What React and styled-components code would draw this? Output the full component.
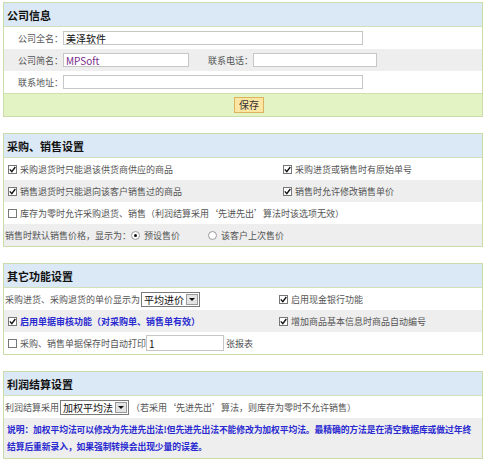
import React from 'react';
import styled, { createGlobalStyle } from 'styled-components';

const GlobalStyle = createGlobalStyle`
	body {
		margin: 0;
		background: #ffffff;
		font-family: 'Noto Sans CJK SC', 'Liberation Sans', sans-serif;
		font-size: 9px;
		color: #444;
	}
`;

const Page = styled.div`
	width: 480px;
	padding: 2px 0 0 3px;
	display: flex;
	flex-flow: column nowrap;
	gap: 16px;
`;

const Panel = styled.section`
	border: 1px solid #c9dca9;
	display: flex;
	flex-flow: column nowrap;
`;

const Header = styled.h3`
	margin: 0;
	height: 23px;
	display: flex;
	align-items: center;
	padding-left: 3px;
	background: #dbe9f6;
	border-bottom: 1px solid #cfe0bb;
	font-size: 11px;
	font-weight: bold;
	color: #111;
`;

const Row = styled.div`
	height: ${(p) => p.$h || 22}px;
	display: ${(p) => (p.$cols ? 'grid' : 'flex')};
	grid-template-columns: ${(p) => p.$cols || 'none'};
	align-items: center;
	padding-left: ${(p) => (p.$pad === undefined ? 3 : p.$pad)}px;
	background: ${(p) => (p.$gray ? '#eeeeee' : '#ffffff')};
	white-space: nowrap;
`;

const Cell = styled.div`
	display: flex;
	align-items: center;
`;

const Label = styled.span`
	width: ${(p) => p.$w || 56}px;
	text-align: right;
	color: #555;
	margin-left: ${(p) => p.$ml || 0}px;
`;

const TextInput = styled.div`
	width: ${(p) => p.$w}px;
	height: ${(p) => p.$h || 14}px;
	box-sizing: border-box;
	border: 1px solid #c6c6c6;
	background: #fff;
	display: flex;
	align-items: center;
	padding-left: 2px;
	font-size: 10px;
	color: ${(p) => p.$color || '#111'};
	margin-right: 2px;
`;

const Footer = styled.div`
	height: 22px;
	display: flex;
	align-items: center;
	justify-content: center;
	background: #e4f3c4;
	border-top: 1px solid #cfe0b0;
`;

const SaveButton = styled.button`
	height: 16px;
	padding: 0 4px;
	font-family: inherit;
	font-size: 10px;
	color: #333;
	background: #fde6a4;
	border: 1px solid #dcb35e;
	margin-left: 12px;
	line-height: 1;
`;

const Box = styled.span`
	width: 9px;
	height: 9px;
	box-sizing: border-box;
	border: 1px solid #777;
	background: #fff;
	display: inline-flex;
	align-items: center;
	justify-content: center;
	margin: 0 3px 0 1px;
	flex: none;
`;

const Radio = styled(Box)`
	border-radius: 50%;
	border-color: #999;
	margin: 0 4px 0 ${(p) => p.$ml || 0}px;
`;

const Dot = styled.span`
	width: 3px;
	height: 3px;
	border-radius: 50%;
	background: #111;
`;

const Text = styled.span`
	color: ${(p) => (p.$blue ? '#2a2ad0' : '#555')};
	font-weight: ${(p) => (p.$blue ? 'bold' : 'normal')};
	margin-left: ${(p) => p.$ml || 0}px;
`;

const SelectBox = styled.div`
	height: 15px;
	box-sizing: border-box;
	border: 1px solid #7a7a7a;
	background: #fff;
	display: flex;
	align-items: center;
	gap: 2px;
	padding-left: 2px;
	font-size: 10px;
	color: #111;
	margin: 0 2px 0 1px;
`;

const Arrow = styled.span`
	width: 12px;
	height: 11px;
	margin-right: 1px;
	background: #e4e4e4;
	border: 1px solid #999;
	box-sizing: border-box;
	display: flex;
	align-items: center;
	justify-content: center;
	&::after {
		content: '';
		border-left: 3px solid transparent;
		border-right: 3px solid transparent;
		border-top: 3px solid #111;
	}
`;

const Note = styled.div`
	background: #eeeeee;
	padding: 3px 0 3px 3px;
	line-height: 17px;
	color: #2a2ad0;
	font-weight: bold;
	font-size: 8.8px;
	letter-spacing: -0.1px;
	white-space: nowrap;
`;

function Check({ checked, children, blue }) {
	return (
		<Cell>
			<Box>
				{checked && (
					<svg width='7' height='7' viewBox='0 0 7 7'>
						<path d='M0.8 3.4 L2.8 5.6 L6.3 1' stroke='#111' strokeWidth='1.4' fill='none' />
					</svg>
				)}
			</Box>
			<Text $blue={blue}>{children}</Text>
		</Cell>
	);
}

function Select({ value }) {
	return (
		<SelectBox>
			{value}
			<Arrow />
		</SelectBox>
	);
}

export default function App() {
	return (
		<>
			<GlobalStyle />
			<Page>
				<Panel>
					<Header>公司信息</Header>
					<Row>
						<Label>公司全名：</Label>
						<TextInput $w={300}>美泽软件</TextInput>
					</Row>
					<Row $gray>
						<Label>公司简名：</Label>
						<TextInput $w={126} $color='#7a2c8a'>MPSoft</TextInput>
						<Label $w={60} $ml={2}>联系电话：</Label>
						<TextInput $w={124} />
					</Row>
					<Row>
						<Label>联系地址：</Label>
						<TextInput $w={300} />
					</Row>
					<Footer>
						<SaveButton>保存</SaveButton>
					</Footer>
				</Panel>

				<Panel>
					<Header>采购、销售设置</Header>
					<Row $cols='275px 1fr'>
						<Check checked>采购退货时只能退该供货商供应的商品</Check>
						<Check checked>采购进货或销售时有原始单号</Check>
					</Row>
					<Row $gray $cols='275px 1fr'>
						<Check checked>销售退货时只能退向该客户销售过的商品</Check>
						<Check checked>销售时允许修改销售单价</Check>
					</Row>
					<Row>
						<Check>库存为零时允许采购退货、销售（利润结算采用‘先进先出’算法时该选项无效）</Check>
					</Row>
					<Row $gray $pad={1}>
						<Text>销售时默认销售价格，显示为：</Text>
						<Radio>
							<Dot />
						</Radio>
						<Text>预设售价</Text>
						<Radio $ml={28} />
						<Text>该客户上次售价</Text>
					</Row>
				</Panel>

				<Panel>
					<Header>其它功能设置</Header>
					<Row $pad={1} $cols='273px 1fr'>
						<Cell>
							<Text>采购进货、采购退货的单价显示为</Text>
							<Select value='平均进价' />
						</Cell>
						<Check checked>启用现金银行功能</Check>
					</Row>
					<Row $gray $cols='271px 1fr'>
						<Check checked blue>
							启用单据审核功能（对采购单、销售单有效）
						</Check>
						<Check checked>增加商品基本信息时商品自动编号</Check>
					</Row>
					<Row>
						<Check>采购、销售单据保存时自动打印</Check>
						<TextInput $w={78} $h={16}>
							1
						</TextInput>
						<Text>张报表</Text>
					</Row>
				</Panel>

				<Panel>
					<Header>利润结算设置</Header>
					<Row $pad={1}>
						<Text>利润结算采用</Text>
						<Select value='加权平均法' />
						<Text>（若采用‘先进先出’算法，则库存为零时不允许销售）</Text>
					</Row>
					<Note>
						说明：加权平均法可以修改为先进先出法!但先进先出法不能修改为加权平均法。最精确的方法是在清空数据库或做过年终
						<br />
						结算后重新录入，如果强制转换会出现少量的误差。
					</Note>
				</Panel>
			</Page>
		</>
	);
}
